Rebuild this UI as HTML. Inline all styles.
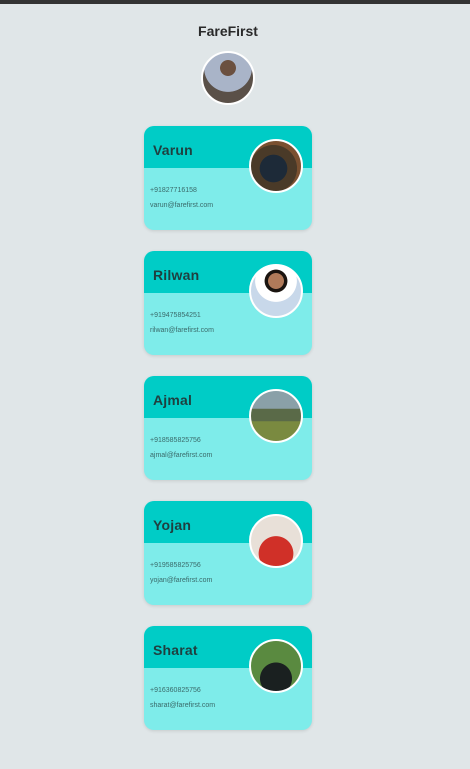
<!DOCTYPE html>
<html><head><style>
*{margin:0;padding:0;box-sizing:border-box}
body{width:470px;height:769px;background:#e0e6e8;font-family:"Liberation Sans",sans-serif;position:relative;overflow:hidden}
.bar{position:absolute;top:0;left:0;width:470px;height:4px;background:#333}
h1{position:absolute;top:23px;left:0;width:456px;text-align:center;font-size:14px;font-weight:bold;color:#2a2a2a}
.av{position:absolute;border-radius:50%;border:2px solid #fff;width:54px;height:54px}
.card{position:absolute;left:144px;width:168px;height:104px;border-radius:10px;background:#7eecea;overflow:hidden;box-shadow:0 1px 3px rgba(0,0,0,.12)}
.card .top{height:42px;background:#00ccc6}
.card .n{position:absolute;left:9px;top:16px;font-size:14px;font-weight:bold;color:#1f3f3f;letter-spacing:.2px}
.card .p{position:absolute;left:6px;top:61px;font-size:7px;color:#3a6a6a}
.card .e{position:absolute;left:6px;top:76px;font-size:7px;color:#3a6a6a}
</style></head><body>
<div class="bar"></div>
<h1>FareFirst</h1>
<div class="av" style="left:201px;top:51px;background:radial-gradient(circle at 50% 30%,#6b5040 0 18%,#a9b4c8 19% 55%,#5a5048 56%)"></div>

<div class="card" style="top:126px"><div class="top"></div><div class="n">Varun</div><div class="p">+91827716158</div><div class="e">varun@farefirst.com</div></div>
<div class="av" style="left:249px;top:139px;background:radial-gradient(circle at 45% 55%,#1d2a38 0 35%,#4a3a28 36% 60%,#7a5030 61%)"></div>

<div class="card" style="top:251px"><div class="top"></div><div class="n">Rilwan</div><div class="p">+919475854251</div><div class="e">rilwan@farefirst.com</div></div>
<div class="av" style="left:249px;top:264px;background:radial-gradient(circle at 50% 30%,#b07a5a 0 18%,#1a1410 19% 26%,#fff 27% 48%,#c8d8ea 49%)"></div>

<div class="card" style="top:376px"><div class="top"></div><div class="n">Ajmal</div><div class="p">+918585825756</div><div class="e">ajmal@farefirst.com</div></div>
<div class="av" style="left:249px;top:389px;background:linear-gradient(#8aa0a8 0 35%,#5a6a48 36% 60%,#7a8a40 61%)"></div>

<div class="card" style="top:501px"><div class="top"></div><div class="n">Yojan</div><div class="p">+919585825756</div><div class="e">yojan@farefirst.com</div></div>
<div class="av" style="left:249px;top:514px;background:radial-gradient(circle at 50% 75%,#d03028 0 38%,#e8e0d8 39%)"></div>

<div class="card" style="top:626px"><div class="top"></div><div class="n">Sharat</div><div class="p">+916360825756</div><div class="e">sharat@farefirst.com</div></div>
<div class="av" style="left:249px;top:639px;background:radial-gradient(circle at 50% 75%,#1a2020 0 35%,#5a8a40 36%)"></div>
</body></html>
